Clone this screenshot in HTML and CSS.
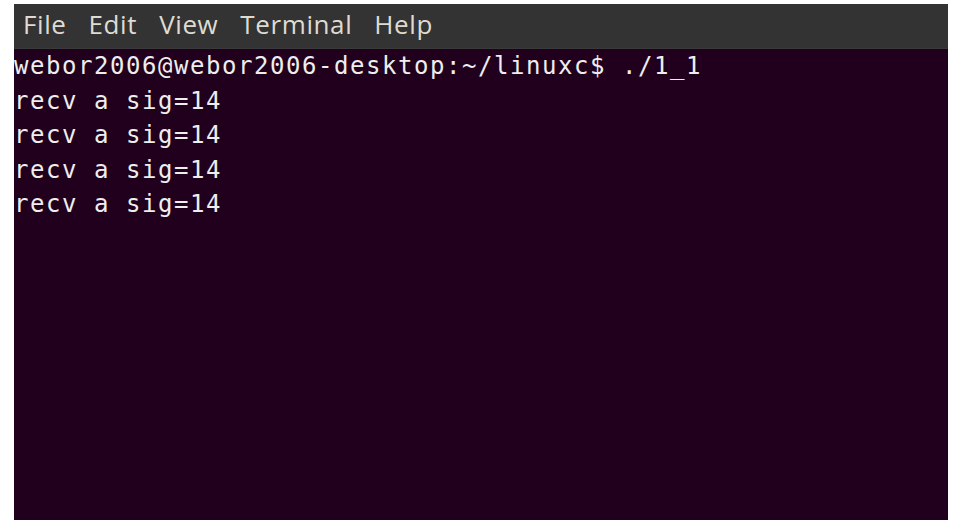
FILE: index.html
```html
<!DOCTYPE html>
<html>
<head>
<meta charset="utf-8">
<link rel="stylesheet" href="styles.css">
</head>
<body>
<div class="window">
  <div class="menubar">
    <span class="menu-item">File</span>
    <span class="menu-item">Edit</span>
    <span class="menu-item">View</span>
    <span class="menu-item">Terminal</span>
    <span class="menu-item">Help</span>
  </div>
  <div class="terminal">
    <div class="line">webor2006@webor2006-desktop:~/linuxc$ ./1_1</div>
    <div class="line">recv a sig=14</div>
    <div class="line">recv a sig=14</div>
    <div class="line">recv a sig=14</div>
    <div class="line">recv a sig=14</div>
  </div>
</div>
</body>
</html>
```

FILE: styles.css
```css
html, body {
  margin: 0;
  padding: 0;
  background: #ffffff;
}
body {
  width: 962px;
  height: 520px;
  overflow: hidden;
}
.window {
  margin: 4px 0 0 14px;
  width: 934px;
  height: 516px;
  display: flex;
  flex-direction: column;
}
.menubar {
  height: 45px;
  box-sizing: border-box;
  background: #333333;
  border-bottom: 1px solid #3a3a3a;
  display: flex;
  align-items: center;
  gap: 22px;
  padding: 0 0 5px 9px;
  font-family: "Open Sans", "Noto Sans", sans-serif;
  font-size: 26px;
  letter-spacing: 0.6px;
  color: #dfdbd2;
}
.terminal {
  flex: 1;
  background: #21001e;
  padding: 0;
  font-family: "DejaVu Sans Mono", monospace;
  font-size: 24px;
  letter-spacing: 1.55px;
  line-height: 34.5px;
  color: #eeeeec;
}
.line {
  white-space: pre;
}
```
